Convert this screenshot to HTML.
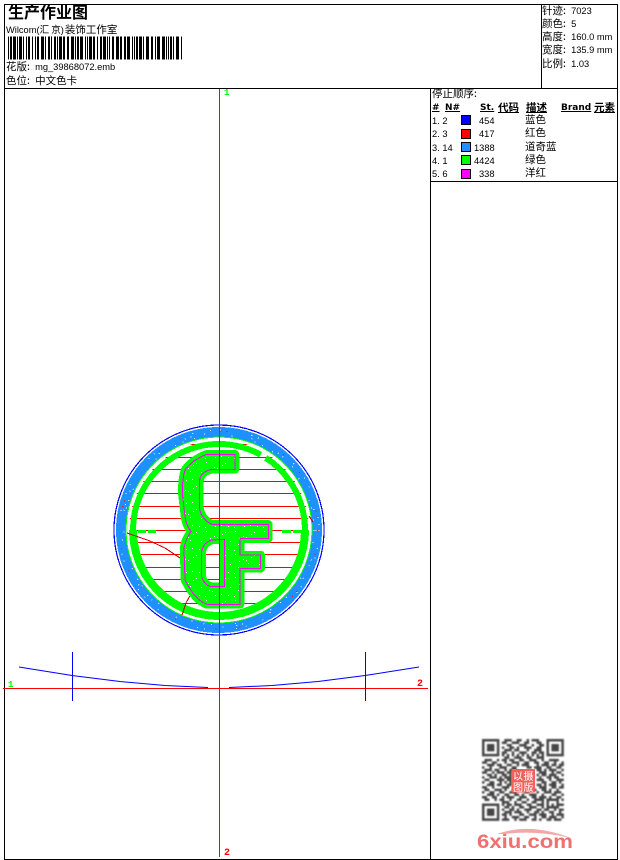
<!DOCTYPE html>
<html><head><meta charset="utf-8"><style>
html,body{margin:0;padding:0;background:#fff}
#p{position:relative;width:620px;height:860px;overflow:hidden;background:#fff;color:#000;font:9.3px/12px "Liberation Sans","WenQuanYi Zen Hei",sans-serif}
svg{position:absolute;left:0;top:0}
.t{position:absolute;white-space:pre;line-height:12px;font-size:9.3px}
.c{font-family:"Liberation Sans","WenQuanYi Zen Hei","Noto Sans CJK SC",sans-serif}
.t i{font-style:normal;font-size:10.5px;font-family:"WenQuanYi Zen Hei","Noto Sans CJK SC",sans-serif}
.h{font-weight:bold;text-decoration:underline;font-family:"DejaVu Sans","WenQuanYi Zen Hei",sans-serif;font-size:9px}
.s{position:absolute;left:461px;width:8px;height:8px;border:1px solid #000}
</style></head><body><div id="p">
<svg width="620" height="860" viewBox="0 0 620 860">
<defs>
<pattern id="sp" width="29" height="23" patternUnits="userSpaceOnUse"><path d="M3 2h1v1h-1zM11 7h1v1h-1zM14 8h1v1h-1zM22 3h1v1h-1zM27 12h1v1h-1zM6 15h1v1h-1zM9 16h1v1h-1zM18 19h1v1h-1zM25 20h1v1h-1zM2 21h1v1h-1zM16 11h1v1h-1zM12 20h1v1h-1zM19 5h1v1h-1zM7 9h1v1h-1z" fill="#fff"/></pattern>
<clipPath id="cc"><circle cx="219" cy="530" r="90"/></clipPath>
<filter id="bl" x="-5%" y="-5%" width="110%" height="110%"><feGaussianBlur stdDeviation="0.35"/></filter>
</defs>
<g shape-rendering="crispEdges">
<path d="M4.5 4.5H617.5V859.5H4.5ZM4.5 88.5H617.5M541.5 4.5V88.5M430.5 88.5V859.5M430.5 181.5H617.5" fill="none" stroke="#000"/>
<line x1="8" y1="48" x2="182" y2="48" stroke="#000" stroke-width="23" stroke-dasharray="1 1 2 1 3 1 1 1 3 1 1 2 1 1 2 2 1 2 1 1 2 2 3 1 1 2 2 1 1 2 2 1 1 1 3 1 2 2 2 2 3 1 1 1 2 1 3 2 1 1 1 1 3 1 2 2 1 2 2 1 3 1 1 1 1 2 2 2 3 1 2 2 2 1 3 2 1 1 1 1 2 1 3 1 1 2 3 2 2 2 1 1 3 2 3 1 1 1 1 1 2 1 1 2 3 2 3 1 2 1 1 1 1 1 3"/>
<g clip-path="url(#cc)"><path d="M120 444.5H320M120 457.5H320M120 469.5H320M120 481.5H320M120 493.5H320M120 506.5H320M120 518.5H320M120 530.5H320M120 542.5H320M120 554.5H320M120 567.5H320M120 579.5H320M120 591.5H320M120 603.5H320M120 616.5H320" stroke="#f00" fill="none"/></g>
<circle cx="219" cy="530" r="105" fill="none" stroke="#00f" stroke-width="1.2"/>
<circle cx="219" cy="530" r="98" fill="none" stroke="#1e90ff" stroke-width="10"/>
<circle cx="219" cy="530" r="100" fill="none" stroke="#fff" stroke-width="1" stroke-dasharray="1 17 1 9 1 31 1 6 1 43"/>
<circle cx="219" cy="530" r="97" fill="none" stroke="#fff" stroke-width="1" stroke-dasharray="1 29 1 5 1 13 1 47"/>
<circle cx="219" cy="530" r="95" fill="none" stroke="#fff" stroke-width="1" stroke-dasharray="1 11 1 37 1 23 1 7"/>
<circle cx="219" cy="530" r="99" fill="none" stroke="#f00" stroke-width="1" stroke-dasharray="1 23 1 41 1 5 1 61"/>
<circle cx="219" cy="530" r="93" fill="none" stroke="#00ff00" stroke-width="1"/>
<circle cx="219" cy="530" r="86" fill="none" stroke="#00ff00" stroke-width="6" stroke-dasharray="534 6" transform="rotate(-57 219 530)"/>
<path d="M133 530A86 86 0 0 0 305 530" fill="none" stroke="#00ff00" stroke-width="8"/>
<path d="M138 530h8v3h-8zM148 530h8v3h-8zM282 530h9v3h-9zM293 530h8v3h-8z" fill="#00ff00"/>
<path d="M127 533L150 541L165 548L180 558M193 590L186 603L182 615M309 516L313 522" stroke="#d00000" fill="none"/>
<path d="M206.7 454.3H235V469.3H211.7Q199.3 472 199.3 483V505Q199.3 518 211.7 524.3H268.3V538.7H240V555H260.7V568.3H240V604.3H206.7Q195 600 185 580L184 548.3Q185 540 191 531.7Q186 525 185 516.7L182.3 493.3Q182 480 185 470Q192 460 206.7 454.3ZM224.3 539.3V586.7H211.7Q204 585 201.7 576.7V551.7Q203 543 211.7 540Z" fill="#00ff00" fill-rule="evenodd" stroke="#00ff00" stroke-width="8.5" stroke-linejoin="round"/>
<path d="M206.7 454.3H235V469.3H211.7Q199.3 472 199.3 483V505Q199.3 518 211.7 524.3H268.3V538.7H240V555H260.7V568.3H240V604.3H206.7Q195 600 185 580L184 548.3Q185 540 191 531.7Q186 525 185 516.7L182.3 493.3Q182 480 185 470Q192 460 206.7 454.3ZM224.3 539.3V586.7H211.7Q204 585 201.7 576.7V551.7Q203 543 211.7 540Z" fill="url(#sp)" fill-rule="evenodd" stroke="#f0f" stroke-width="1"/>
<path d="M219.5 89V857" stroke="#f00" fill="none"/>
<path d="M3 688.5H428" stroke="#f00" fill="none"/>
<path d="M72.5 652V701M365.5 652V701" stroke="#00f" fill="none"/>
</g>
<path d="M19 667L72 675.5L120 681.5L165 685.5L208 687.5M229 687.5L272 685.5L318 681.5L365 675.5L419 667" fill="none" stroke="#00f" stroke-width="1"/>
<g filter="url(#bl)" transform="translate(482 739) scale(2.48)">
<path fill="none" stroke="#444" stroke-width="1" d="M0 .5h7M9 .5h3M14 .5h2M18 .5h1M20 .5h3M26 .5h7M0 1.5h1M6 1.5h1M8 1.5h2M12 1.5h3M17 1.5h2M22 1.5h2M26 1.5h1M32 1.5h1M0 2.5h1M2 2.5h3M6 2.5h1M10 2.5h2M15 2.5h3M20 2.5h1M23 2.5h2M26 2.5h1M28 2.5h3M32 2.5h1M0 3.5h1M2 3.5h3M6 3.5h1M8 3.5h1M11 3.5h2M14 3.5h1M17 3.5h3M22 3.5h2M26 3.5h1M28 3.5h3M32 3.5h1M0 4.5h1M2 4.5h3M6 4.5h1M9 4.5h3M13 4.5h2M18 4.5h1M21 4.5h3M26 4.5h1M28 4.5h3M32 4.5h1M0 5.5h1M6 5.5h1M8 5.5h2M12 5.5h1M15 5.5h3M20 5.5h2M23 5.5h2M26 5.5h1M32 5.5h1M0 6.5h7M8 6.5h1M10 6.5h1M12 6.5h1M14 6.5h1M16 6.5h1M18 6.5h1M20 6.5h1M22 6.5h1M24 6.5h1M26 6.5h7M9 7.5h2M13 7.5h3M18 7.5h2M22 7.5h3M1 8.5h3M6 8.5h1M8 8.5h2M11 8.5h2M15 8.5h2M19 8.5h3M24 8.5h1M27 8.5h4M0 9.5h2M4 9.5h2M9 9.5h1M12 9.5h3M17 9.5h2M21 9.5h2M25 9.5h2M29 9.5h1M32 9.5h1M2 10.5h3M6 10.5h2M10 10.5h2M14 10.5h1M16 10.5h3M22 10.5h1M24 10.5h3M28 10.5h2M31 10.5h2M0 11.5h1M3 11.5h1M7 11.5h3M12 11.5h2M18 11.5h2M21 11.5h3M26 11.5h2M30 11.5h2M1 12.5h3M5 12.5h2M9 12.5h1M11 12.5h3M22 12.5h2M25 12.5h1M27 12.5h3M32 12.5h1M0 13.5h2M4 13.5h1M6 13.5h3M10 13.5h2M23 13.5h3M28 13.5h1M30 13.5h2M2 14.5h2M5 14.5h1M8 14.5h2M11 14.5h1M22 14.5h1M24 14.5h2M27 14.5h3M32 14.5h1M0 15.5h1M3 15.5h3M7 15.5h1M9 15.5h3M23 15.5h1M26 15.5h2M29 15.5h2M1 16.5h2M6 16.5h3M10 16.5h2M22 16.5h3M27 16.5h1M30 16.5h3M0 17.5h1M3 17.5h2M7 17.5h1M9 17.5h1M11 17.5h1M24 17.5h2M28 17.5h2M31 17.5h1M2 18.5h3M6 18.5h2M10 18.5h2M22 18.5h2M25 18.5h1M27 18.5h3M32 18.5h1M0 19.5h2M4 19.5h1M8 19.5h3M23 19.5h3M28 19.5h2M31 19.5h2M1 20.5h2M5 20.5h3M9 20.5h1M12 20.5h1M15 20.5h2M19 20.5h3M24 20.5h2M27 20.5h1M30 20.5h1M0 21.5h1M3 21.5h2M7 21.5h2M11 21.5h3M17 21.5h2M22 21.5h1M25 21.5h3M29 21.5h3M2 22.5h3M6 22.5h1M9 22.5h2M13 22.5h2M16 22.5h1M19 22.5h3M24 22.5h1M28 22.5h2M32 22.5h1M0 23.5h2M4 23.5h2M8 23.5h1M10 23.5h3M15 23.5h3M20 23.5h2M23 23.5h3M27 23.5h1M30 23.5h2M1 24.5h2M5 24.5h1M7 24.5h2M11 24.5h1M14 24.5h2M18 24.5h1M21 24.5h4M26 24.5h5M32 24.5h1M8 25.5h3M13 25.5h1M16 25.5h2M20 25.5h2M24 25.5h1M26 25.5h1M30 25.5h1M0 26.5h7M8 26.5h1M10 26.5h2M13 26.5h3M18 26.5h2M22 26.5h3M26 26.5h1M28 26.5h1M30 26.5h3M0 27.5h1M6 27.5h1M9 27.5h2M12 27.5h1M15 27.5h2M19 27.5h3M24 27.5h1M26 27.5h5M0 28.5h1M2 28.5h3M6 28.5h1M8 28.5h1M11 28.5h2M14 28.5h1M17 28.5h3M22 28.5h2M25 28.5h2M29 28.5h1M31 28.5h2M0 29.5h1M2 29.5h3M6 29.5h1M9 29.5h3M13 29.5h3M18 29.5h1M21 29.5h2M24 29.5h1M27 29.5h2M31 29.5h1M0 30.5h1M2 30.5h3M6 30.5h1M8 30.5h2M11 30.5h1M15 30.5h2M19 30.5h3M23 30.5h3M28 30.5h1M30 30.5h3M0 31.5h1M6 31.5h1M9 31.5h1M12 31.5h3M17 31.5h2M21 31.5h1M24 31.5h2M27 31.5h3M32 31.5h1M0 32.5h7M8 32.5h3M13 32.5h1M15 32.5h3M20 32.5h2M23 32.5h1M26 32.5h2M29 32.5h3"/>
</g>
<rect x="511.5" y="769" width="23.5" height="23.5" rx="1" fill="#f4615c"/>
<text x="513" y="780" font-size="10" fill="#fff" font-family="'WenQuanYi Zen Hei',sans-serif">以</text>
<text x="523.5" y="780" font-size="10" fill="#fff" font-family="'WenQuanYi Zen Hei',sans-serif">摄</text>
<text x="513" y="791" font-size="10" fill="#fff" font-family="'WenQuanYi Zen Hei',sans-serif">图</text>
<text x="523.5" y="791" font-size="10" fill="#fff" font-family="'WenQuanYi Zen Hei',sans-serif">版</text>
<text x="477" y="848" font-size="19" font-weight="bold" fill="#f07070" font-family="'Liberation Sans',sans-serif" textLength="96" lengthAdjust="spacingAndGlyphs">6xiu.com</text>
<path d="M497 834Q530 822 571 838Q535 830 505 834Z" fill="#f3a8a8"/>
</svg>
<div class="t c" style="left:8px;top:5px;font-size:16px;font-weight:bold;line-height:17px">生产作业图</div>
<div class="t c" style="left:6px;top:23px">Wilcom(<i style="font-size:9.5px">汇 京</i>)<i style="margin-left:1px">装饰工作室</i></div>
<div class="t c" style="left:6px;top:61px"><i>花版:</i>  mg_39868072.emb</div>
<div class="t c" style="left:6px;top:75px"><i>色位:</i>  <i>中文色卡</i></div>
<div class="t c" style="left:542px;top:5px"><i>针迹:</i>  7023</div>
<div class="t c" style="left:542px;top:18px"><i>颜色:</i>  5</div>
<div class="t c" style="left:542px;top:31px"><i>高度:</i>  160.0 mm</div>
<div class="t c" style="left:542px;top:44px"><i>宽度:</i>  135.9 mm</div>
<div class="t c" style="left:542px;top:58px"><i>比例:</i>  1.03</div>
<div class="t c" style="left:432px;top:88px"><i>停止顺序:</i></div>
<div class="t h" style="left:432px;top:102px">#</div>
<div class="t h" style="left:445px;top:102px">N#</div>
<div class="t h" style="left:480px;top:102px">St.</div>
<div class="t h" style="left:498px;top:102px"><i>代码</i></div>
<div class="t h" style="left:526px;top:102px"><i>描述</i></div>
<div class="t h" style="left:561px;top:102px">Brand</div>
<div class="t h" style="left:594px;top:102px"><i>元素</i></div>
<div class="t c" style="left:432px;top:115px">1. 2</div><div class="s" style="top:115px;background:#00f"></div><div class="t c" style="left:479px;top:115px">454</div><div class="t c" style="left:525px;top:114px"><i>蓝色</i></div>
<div class="t c" style="left:432px;top:128px">2. 3</div><div class="s" style="top:129px;background:#f00"></div><div class="t c" style="left:479px;top:128px">417</div><div class="t c" style="left:525px;top:127px"><i>红色</i></div>
<div class="t c" style="left:432px;top:142px">3. 14</div><div class="s" style="top:142px;background:#1e90ff"></div><div class="t c" style="left:474px;top:142px">1388</div><div class="t c" style="left:525px;top:141px"><i>道奇蓝</i></div>
<div class="t c" style="left:432px;top:155px">4. 1</div><div class="s" style="top:155px;background:#0f0"></div><div class="t c" style="left:474px;top:155px">4424</div><div class="t c" style="left:525px;top:154px"><i>绿色</i></div>
<div class="t c" style="left:432px;top:168px">5. 6</div><div class="s" style="top:169px;background:#f0f"></div><div class="t c" style="left:479px;top:168px">338</div><div class="t c" style="left:525px;top:167px"><i>洋红</i></div>
<div class="t" style="left:224px;top:87px;color:#0f0;font:bold 9px/12px 'Liberation Mono',monospace">1</div>
<div class="t" style="left:224px;top:848px;color:#f00;font:bold 10px/12px 'Liberation Mono',monospace">2</div>
<div class="t" style="left:8px;top:679px;color:#0f0;font:bold 9px/12px 'Liberation Mono',monospace">1</div>
<div class="t" style="left:417px;top:679px;color:#f00;font:bold 10px/12px 'Liberation Mono',monospace">2</div>
</div></body></html>
